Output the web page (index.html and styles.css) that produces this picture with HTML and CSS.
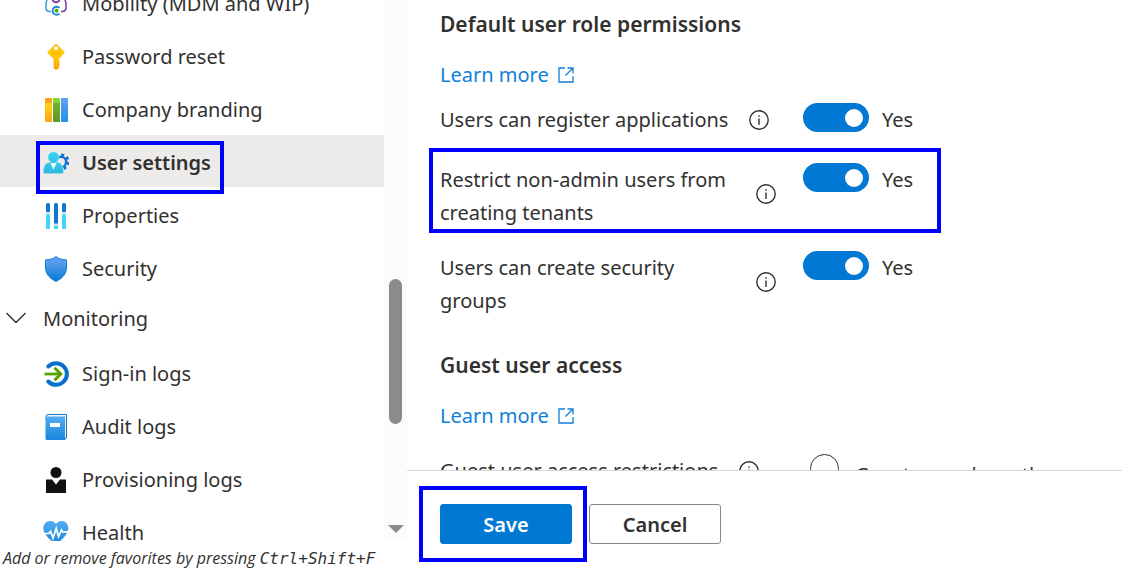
FILE: index.html
```html
<!DOCTYPE html>
<html lang="en">
<head>
<meta charset="utf-8">
<meta name="viewport" content="width=device-width, initial-scale=1">
<title>User settings</title>
<link rel="stylesheet" href="styles.css">
</head>
<body>
<div class="app">
  <aside class="sidebar">
    <div class="sidebar-body">
      <nav class="nav" aria-label="Manage">
        <a class="nav-item" href="#mobility">
          <svg class="icon" viewBox="0 0 26 26" fill="none" aria-hidden="true">
            <path d="M9 4H7.500Q5 4 4.500 7L3 12v5q0 3 3 3.500h2" stroke="#3aa0dc" stroke-width="1.500"/>
            <path d="M17 4h1.500Q21 4 21.500 7l1.500 5v5q0 3-3 3.500h-2" stroke="#7a3fa5" stroke-width="1.500"/>
            <path d="M9.500 8.500a3.600 3.600 0 0 0 7 0" stroke="#7a3fa5" stroke-width="1.800"/>
            <path d="M16.500 17a4 4 0 1 0 0 5.500" stroke="#1b84d6" stroke-width="1.800"/>
            <circle cx="13.500" cy="19.700" r="2" fill="#57a300"/>
          </svg>
          <span>Mobility (MDM and WIP)</span>
        </a>
        <a class="nav-item" href="#password">
          <svg class="icon" viewBox="0 0 26 26" aria-hidden="true">
            <defs><linearGradient id="key" x2="0" y2="1"><stop stop-color="#feb52c"/><stop offset=".4" stop-color="#ffd400"/><stop offset="1" stop-color="#fea11b"/></linearGradient></defs>
            <path fill="url(#key)" fill-rule="evenodd" d="M11.800.6q1.200-1 2.400 0l6.800 6.600q1 1 0 2.200l-5 5.600v1.500l1.300 1.300-1.300 1.300 1.300 1.300-1.300 1.400v2.500L13 26.200l-2.400-1.900V15L5 9.400q-1-1.200 0-2.200ZM13 2.300a1.900 1.900 0 1 0 0 3.800 1.900 1.900 0 0 0 0-3.800Z"/>
            <path d="M8.500 8.800h9M8.500 10.800h9M12.200 16v8" stroke="#ffa400" stroke-width=".8"/>
          </svg>
          <span>Password reset</span>
        </a>
        <a class="nav-item" href="#branding">
          <svg class="icon" viewBox="0 0 26 26" aria-hidden="true">
            <defs>
              <linearGradient id="bar-a" x2="0" y2="1"><stop stop-color="#ffd70f"/><stop offset=".4" stop-color="#ffcb12"/><stop offset="1" stop-color="#fea11b"/></linearGradient>
              <linearGradient id="bar-b" x2="0" y2="1"><stop stop-color="#76bc2d"/><stop offset="1" stop-color="#5e9624"/></linearGradient>
              <linearGradient id="bar-c" x2="0" y2="1"><stop stop-color="#5ea0ef"/><stop offset="1" stop-color="#1b93eb"/></linearGradient>
            </defs>
            <rect x="2" y="1" width="7" height="24" rx="1" fill="url(#bar-a)"/><path d="M2 6V2q0-1 1-1h6v5Z" fill="#faa21d"/>
            <rect x="10" y="1" width="7" height="24" rx="1" fill="url(#bar-b)"/><path d="M10 1h7v5h-7Z" fill="#86d633"/>
            <rect x="18" y="1" width="7" height="24" rx="1" fill="url(#bar-c)"/><path d="M18 1h7v5h-7Z" fill="#5ea0ef"/>
          </svg>
          <span>Company branding</span>
        </a>
        <a class="nav-item is-active" href="#user-settings" aria-current="page">
          <svg class="icon" viewBox="0 0 26 26" aria-hidden="true">
            <defs><linearGradient id="user" x2="0" y2="1"><stop stop-color="#36d4f5"/><stop offset="1" stop-color="#2fb9de"/></linearGradient></defs>
            <g fill="none" stroke="#0f74d1"><circle cx="18" cy="12" r="5.200" stroke-width="2.600"/><circle cx="18" cy="12" r="7.300" stroke-width="2.600" stroke-dasharray="2.900 2.830"/></g>
            <path fill="url(#user)" stroke="#ecebe9" stroke-width=".5" d="M10.500 1.700a5.600 5.600 0 0 1 3.200 10.200l3.300 1c2.500 1 3.400 5.500 3.700 8.500q.2 2.300-2 2.300H2.200q-2.200 0-2-2.300c.3-3 1.200-7.500 3.800-8.500l3.300-1a5.600 5.600 0 0 1 3.200-10.200Z"/>
            <path fill="#fff" d="M7.200 12.300q3.300 1.700 6.600 0l-3.300 7.500Z"/>
          </svg>
          <span>User settings</span>
          <span class="callout callout-nav"></span>
        </a>
        <a class="nav-item" href="#properties">
          <svg class="icon" viewBox="0 0 26 26" aria-hidden="true">
            <g fill="#0f78d4"><rect x="3" width="4" height="9.500" rx="1.500"/><rect x="11" width="4" height="21" rx="1.500"/><rect x="19" width="4" height="9.500" rx="1.500"/></g>
            <g fill="#42d4f3"><rect x="3" y="11" width="4" height="15.500" rx="1.500"/><rect x="11" y="22" width="4" height="4.500" rx="1.500"/><rect x="19" y="11" width="4" height="15.500" rx="1.500"/></g>
            <path stroke="#e3e3e3" stroke-width="1.500" d="M2.500 10h5M10.500 21.500h5M18.500 10h5"/>
          </svg>
          <span>Properties</span>
        </a>
        <a class="nav-item" href="#security">
          <svg class="icon" viewBox="0 0 26 26" aria-hidden="true">
            <defs><linearGradient id="shield" x2="0" y2="1"><stop stop-color="#5ea0ef"/><stop offset=".25" stop-color="#559cea"/><stop offset="1" stop-color="#0878d4"/></linearGradient></defs>
            <path fill="url(#shield)" stroke="#0878d4" stroke-width=".9" d="M13 .5c3.300 2.800 6 3 10.500 3.300V12c0 7-5.500 10.800-10.500 13.500C8 22.800 2.500 19 2.500 12V3.800C7 3.500 9.700 3.300 13 .5Z"/>
          </svg>
          <span>Security</span>
        </a>
        <button class="nav-group" type="button" aria-expanded="true">
          <svg class="chevron" viewBox="0 0 20 12" aria-hidden="true"><path d="m.5 1 9.500 9.500L19.500 1" fill="none" stroke="#323130" stroke-width="1.400"/></svg>
          <span>Monitoring</span>
        </button>
        <a class="nav-item" href="#signin">
          <svg class="icon" viewBox="0 0 26 26" fill="none" aria-hidden="true">
            <path d="M5.300 5.500a10.800 10.800 0 1 1 0 15" stroke="#0a72cc" stroke-width="4" stroke-linecap="round"/>
            <path d="M1.500 13h15" stroke="#57a300" stroke-width="2.800"/>
            <path d="m11.500 6.800 6.300 6.200-6.300 6.200" stroke="#57a300" stroke-width="3"/>
          </svg>
          <span>Sign-in logs</span>
        </a>
        <a class="nav-item" href="#audit">
          <svg class="icon" viewBox="0 0 26 26" aria-hidden="true">
            <defs><linearGradient id="book" x2="0" y2="1"><stop stop-color="#52aef0"/><stop offset="1" stop-color="#1986dc"/></linearGradient></defs>
            <path fill="#eaf4fc" stroke="#1b75bd" d="M3 2.500Q3 .5 5 .5h18.500V23q0 2-2 2H5Z"/>
            <path fill="url(#book)" d="M2.500 2.500H22V26H4q-1.500 0-1.500-1.500Z"/>
            <path fill="#fff" d="M7 9h10v4H7Z"/>
          </svg>
          <span>Audit logs</span>
        </a>
        <a class="nav-item" href="#provisioning">
          <svg class="icon" viewBox="0 0 26 26" fill="#111" aria-hidden="true">
            <circle cx="13" cy="5.500" r="5.500"/><path d="M3 12.500h6l4 5 4-5h6V26H3Z"/>
          </svg>
          <span>Provisioning logs</span>
        </a>
        <a class="nav-item" href="#health">
          <svg class="icon" viewBox="0 0 26 26" aria-hidden="true">
            <defs><linearGradient id="heart" x2="0" y2="1"><stop stop-color="#54adef"/><stop offset="1" stop-color="#1584dc"/></linearGradient></defs>
            <path fill="url(#heart)" d="M13 4C15.500.5 18 1 19.500 1 23.500 1.400 25.500 5 25.200 9c-.4 6-7.200 11-12.200 16C8 20 .8 15 .4 9 .1 5 2.500 1.400 6.500 1 8 1 10.500.5 13 4Z"/>
            <path d="M.5 13.500h5.300l1.700-2.200 2.500 7 3.200-10 2.300 8.200 3-6.500 1 1.800h6" fill="none" stroke="#fff" stroke-width="1.700"/>
          </svg>
          <span>Health</span>
        </a>
      </nav>
      <div class="scrollbar" aria-hidden="true">
        <span class="scroll-space-before"></span>
        <span class="scroll-thumb"></span>
        <span class="scroll-space-after"></span>
        <span class="scroll-arrow"></span>
      </div>
    </div>
    <p class="hint">Add or remove favorites by pressing <kbd>Ctrl+Shift+F</kbd></p>
  </aside>

  <main class="main">
    <form class="settings" id="settings">
      <h2 class="heading">Default user role permissions</h2>
      <a class="learn" href="#learn-roles">Learn more
        <svg class="external" viewBox="0 0 16 16" aria-hidden="true"><path d="M7 1H1v14h14V9M9.500 1H15v5.500M15 1 7.500 8.500" fill="none" stroke="currentColor" stroke-width="1.300"/></svg>
      </a>
      <div class="setting">
        <div class="setting-name">
          <label for="register">Users can register applications</label>
          <svg class="info" viewBox="0 0 20 20" aria-hidden="true"><circle cx="10" cy="10" r="9.200"/><path d="M10 8.500V15M10 5.200v1.500"/></svg>
        </div>
        <div class="setting-value"><input class="toggle" id="register" type="checkbox" role="switch" checked><span>Yes</span></div>
      </div>
      <div class="setting setting-tall">
        <div class="setting-name">
          <label for="tenants">Restrict non-admin users from creating tenants</label>
          <svg class="info" viewBox="0 0 20 20" aria-hidden="true"><circle cx="10" cy="10" r="9.200"/><path d="M10 8.500V15M10 5.200v1.500"/></svg>
        </div>
        <div class="setting-value"><input class="toggle" id="tenants" type="checkbox" role="switch" checked><span>Yes</span></div>
        <span class="callout callout-setting"></span>
      </div>
      <div class="setting setting-tall setting-last">
        <div class="setting-name">
          <label for="groups">Users can create security groups</label>
          <svg class="info" viewBox="0 0 20 20" aria-hidden="true"><circle cx="10" cy="10" r="9.200"/><path d="M10 8.500V15M10 5.200v1.500"/></svg>
        </div>
        <div class="setting-value"><input class="toggle" id="groups" type="checkbox" role="switch" checked><span>Yes</span></div>
      </div>
      <h2 class="heading">Guest user access</h2>
      <a class="learn learn-guest" href="#learn-guests">Learn more
        <svg class="external" viewBox="0 0 16 16" aria-hidden="true"><path d="M7 1H1v14h14V9M9.500 1H15v5.500M15 1 7.500 8.500" fill="none" stroke="currentColor" stroke-width="1.300"/></svg>
      </a>
      <div class="setting">
        <div class="setting-name">
          <span>Guest user access restrictions</span>
          <svg class="info" viewBox="0 0 20 20" aria-hidden="true"><circle cx="10" cy="10" r="9.200"/><path d="M10 8.500V15M10 5.200v1.500"/></svg>
        </div>
        <div class="choice"><input class="radio" id="guest-same" name="guest" type="radio"><label for="guest-same">Guest users have the</label></div>
      </div>
    </form>
    <footer class="actions">
      <span class="save-wrap">
        <button class="button button-primary" type="submit" form="settings">Save</button>
        <span class="callout callout-save"></span>
      </span>
      <button class="button" type="button">Cancel</button>
    </footer>
  </main>
</div>
</body>
</html>
```
FILE: styles.css
```css
* { box-sizing: border-box; }

body {
  margin: 0;
  background: #fff;
  color: #323130;
  font: 20px/33px "Noto Sans", "Open Sans", sans-serif;
}

.app {
  display: flex;
  height: 100vh;
  overflow: hidden;
}

.sidebar {
  display: flex;
  flex: 0 0 407px;
  flex-direction: column;
}

.sidebar-body {
  display: flex;
  flex: 1;
  min-height: 0;
}

.nav {
  flex: 1;
  margin-top: -24px;
  overflow: hidden;
}

.nav-item {
  position: relative;
  display: flex;
  align-items: center;
  gap: 13px;
  height: 52px;
  margin-bottom: 1px;
  padding: 3px 16px 0 43px;
  color: inherit;
  text-decoration: none;
}

.nav-item.is-active {
  background: #edebe9;
  font-weight: 600;
}

.icon {
  flex: none;
  width: 26px;
  height: 26px;
}

.nav-group {
  display: flex;
  align-items: center;
  gap: 17px;
  width: 100%;
  height: 52px;
  padding: 0 6px 4px;
  border: 0;
  background: none;
  color: inherit;
  font: inherit;
}

.chevron {
  width: 20px;
  height: 12px;
}

.scrollbar {
  display: flex;
  flex: 0 0 23px;
  flex-direction: column;
  align-items: center;
  padding-bottom: 8px;
  background: #fbfbfb;
}

.scroll-space-before { flex: 279; }
.scroll-space-after { flex: 101; }

.scroll-thumb {
  flex: 145;
  width: 13px;
  border-radius: 7px;
  background: #8b8b8b;
}

.scroll-arrow {
  border: 8px solid transparent;
  border-top-color: #8b8b8b;
  border-bottom: 0;
}

.hint {
  margin: 0;
  padding: 6px 3px 0;
  font: italic 16px/22px "Open Sans", "Noto Sans", sans-serif;
  white-space: nowrap;
}

.hint kbd {
  font: italic 16px/22px "DejaVu Sans Mono", monospace;
}

.main {
  display: flex;
  flex: 1;
  flex-direction: column;
  min-width: 0;
}

.settings {
  flex: 1;
  min-height: 0;
  padding: 8px 33px 0;
  overflow: hidden;
}

.heading {
  margin: 0 0 17px;
  font-size: 21px;
  font-weight: 600;
  line-height: 33px;
}

.learn {
  display: flex;
  align-items: center;
  gap: 9px;
  width: fit-content;
  margin-bottom: 12px;
  color: #0f7fd8;
  text-decoration: none;
}

.learn-guest { margin-bottom: 22px; }

.external {
  width: 16px;
  height: 16px;
}

.setting {
  position: relative;
  display: grid;
  grid-template-columns: 336px 1fr;
  gap: 27px;
  align-items: start;
  margin-bottom: 27px;
}

.setting-tall { margin-bottom: 22px; }
.setting-tall .info { margin-bottom: 4px; }
.setting-last { margin-bottom: 32px; }

.setting-name {
  display: flex;
  align-items: center;
  gap: 21px;
}

.info {
  flex: none;
  width: 20px;
  height: 20px;
  fill: none;
  stroke: #323130;
  stroke-width: 1.4;
}

.setting-value {
  display: flex;
  align-items: flex-start;
  gap: 13px;
}

.toggle {
  display: flex;
  flex: none;
  align-items: center;
  width: 66px;
  height: 29px;
  margin: 0;
  padding: 0 6px;
  border-radius: 15px;
  background: #8a8886;
  appearance: none;
}

.toggle::before {
  width: 18px;
  height: 18px;
  border-radius: 50%;
  background: #fff;
  content: "";
}

.toggle:checked {
  justify-content: flex-end;
  background: #0078d4;
}

.choice {
  display: flex;
  align-items: flex-start;
  gap: 16px;
  padding-left: 7px;
}

.choice label { padding-top: 4px; }

.radio {
  flex: none;
  width: 29px;
  height: 29px;
  margin: 0;
  border: 1px solid #323130;
  border-radius: 50%;
  appearance: none;
}

.actions {
  display: flex;
  gap: 17px;
  padding: 33px 33px 26px;
  border-top: 1px solid #d6d6d6;
}

.save-wrap {
  position: relative;
  display: flex;
}

.button {
  width: 132px;
  height: 40px;
  padding: 0;
  border: 1px solid #8a8886;
  border-radius: 3px;
  background: #fff;
  color: #323130;
  font: 600 20px/33px "Noto Sans", "Open Sans", sans-serif;
}

.button-primary {
  border-color: #0078d4;
  background: #0078d4;
  color: #fff;
}

.callout {
  position: absolute;
  border: 4px solid #00f;
  pointer-events: none;
}

.callout-nav {
  z-index: 1;
  top: 6px;
  left: 36px;
  width: 188px;
  height: 53px;
}

.callout-setting {
  top: -15px;
  left: -11px;
  width: 512px;
  height: 85px;
}

.callout-save { inset: -18px -15px -18px -21px; }
```
